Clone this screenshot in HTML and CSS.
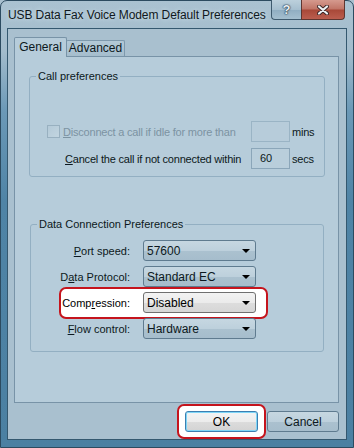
FILE: index.html
```html
<!DOCTYPE html>
<html>
<head>
	<meta charset="utf-8">
	<title>USB Data Fax Voice Modem Default Preferences</title>
	<link rel="stylesheet" href="styles.css">
</head>
<body>
<div class="window">
	<div class="titlebar">
		<span class="title">USB Data Fax Voice Modem Default Preferences</span>
		<div class="caption">
			<span class="cap help">?</span>
			<span class="cap close">
				<svg width="12" height="10" viewBox="0 0 12 10">
					<path d="M2 1.5 L10 8.5 M10 1.5 L2 8.5" stroke="#3a2424" stroke-width="4" stroke-linecap="round"/>
					<path d="M2 1.5 L10 8.5 M10 1.5 L2 8.5" stroke="#eef2f4" stroke-width="2.2" stroke-linecap="round"/>
				</svg>
			</span>
		</div>
	</div>
	<div class="client">
		<div class="tabs">
			<span class="tab active">General</span>
			<span class="tab">Advanced</span>
		</div>
		<div class="page">
			<fieldset class="group calls">
				<legend>Call preferences</legend>
				<div class="line first disabled">
					<span class="check"></span>
					<span class="text wide"><u>D</u>isconnect a call if idle for more than</span>
					<span class="field dim"></span>
					<span class="unit">mins</span>
				</div>
				<div class="line second">
					<span class="text"><u>C</u>ancel the call if not connected within</span>
					<span class="field">60</span>
					<span class="unit">secs</span>
				</div>
			</fieldset>
			<fieldset class="group data">
				<legend>Data Connection Preferences</legend>
				<div class="row">
					<label><u>P</u>ort speed:</label>
					<div class="combo"><span>57600</span><i class="arrow"></i></div>
				</div>
				<div class="row">
					<label>D<u>a</u>ta Protocol:</label>
					<div class="combo"><span>Standard EC</span><i class="arrow"></i></div>
				</div>
				<div class="row mark">
					<label>Comp<u>r</u>ession:</label>
					<div class="combo light"><span>Disabled</span><i class="arrow"></i></div>
				</div>
				<div class="row">
					<label><u>F</u>low control:</label>
					<div class="combo"><span>Hardware</span><i class="arrow"></i></div>
				</div>
			</fieldset>
		</div>
		<div class="buttons">
			<div class="mark-btn"><span class="btn ok">OK</span></div>
			<span class="btn">Cancel</span>
		</div>
	</div>
</div>
</body>
</html>
```

FILE: styles.css
```css
* {
	box-sizing: border-box;
}
html, body {
	margin: 0;
}
body {
	width: 354px;
	height: 448px;
	overflow: hidden;
	font-family: "Liberation Sans", Arial, sans-serif;
	font-size: 11px;
	color: #0c1820;
	background: #a9c0cf;
}
u {
	text-decoration: underline;
	text-underline-offset: 1px;
}

.window {
	width: 354px;
	height: 448px;
	border: 1px solid #2c4b60;
	border-radius: 7px 7px 0 0;
	background: linear-gradient(180deg, #aac2d1 0, #a3bccc 50px, #6b99b7 110px, #4f84a6 200px, #4b80a2 100%);
	display: flex;
	flex-direction: column;
}

/* title bar */
.titlebar {
	height: 27px;
	display: flex;
	align-items: flex-start;
	padding-left: 7px;
}
.title {
	font-size: 12px;
	letter-spacing: -0.1px;
	margin-top: 7px;
	color: #101820;
	text-shadow: 0 0 5px rgba(225, 238, 245, 0.9);
}
.caption {
	margin-left: auto;
	margin-right: 8px;
	margin-top: -1px;
	display: flex;
}
.cap {
	height: 20px;
	display: flex;
	align-items: center;
	justify-content: center;
	border: 1px solid #3e5a6e;
	border-top: 0;
}
.help {
	width: 30px;
	border-radius: 0 0 0 4px;
	border-right: 0;
	background: linear-gradient(180deg, #bcd0dc 0, #a6bfcf 50%, #8fadc1 51%, #a4bfcf 100%);
	color: #e9f0f4;
	font-weight: bold;
	font-size: 13px;
	text-shadow: 0 0 1px #24384a, 0 0 1px #24384a, 0 0 2px #24384a;
}
.close {
	width: 44px;
	border-radius: 0 0 4px 0;
	background: linear-gradient(180deg, #d59a8e 0, #c07466 48%, #a84838 52%, #bb5e4f 100%);
	border-color: #5e3630;
}

/* client area */
.client {
	flex: 1;
	margin: 0 6px 7px 6px;
	border: 1px solid #34586f;
	background: #a9c0cf;
	padding: 8px 7px 0 6px;
	display: flex;
	flex-direction: column;
}
.tabs {
	height: 19px;
	display: flex;
	align-items: flex-end;
}
.tab {
	height: 16px;
	width: 59px;
	margin-left: -1px;
	border: 1px solid #7e99ad;
	border-bottom: 0;
	border-radius: 2px 2px 0 0;
	background: linear-gradient(180deg, #b3c9d7 0, #a5bdcd 100%);
	text-align: center;
	line-height: 15px;
	font-size: 12px;
}
.tab.active {
	position: relative;
	z-index: 1;
	width: 53px;
	height: 20px;
	margin-left: 0;
	margin-bottom: -1px;
	background: #b6ccda;
	border-color: #7893a7;
	line-height: 18px;
}

.page {
	height: 347px;
	border: 1px solid #7893a7;
	background: #b6ccda;
}

/* group boxes */
.group {
	margin: 0;
	padding: 0;
	border: 1px solid #93afc2;
	border-radius: 3px;
}
.group legend {
	margin-left: 6px;
	padding: 0 2px;
	line-height: 13px;
	font-size: 11px;
}
.calls {
	width: 296px;
	margin: 13px 0 0 14px;
	padding-top: 38px;
	padding-bottom: 7px;
}
.data {
	width: 294px;
	margin: 41px 0 0 15px;
	padding-top: 9px;
	padding-bottom: 12px;
}

.line {
	display: flex;
	align-items: center;
	height: 21px;
	letter-spacing: -0.2px;
}
.line.first {
	padding-left: 17px;
}
.line.second {
	margin-top: 6px;
	padding-left: 35px;
}
.check {
	width: 13px;
	height: 13px;
	border: 1px solid #98b0c0;
	background: linear-gradient(135deg, #b4cad8, #c2d5e0);
	margin-right: 3px;
}
.text {
	width: 186px;
}
.text.wide {
	width: 188px;
}
.disabled .text {
	color: #7c93a2;
}
.field {
	width: 39px;
	height: 21px;
	border: 1px solid #8ba6b9;
	background: #b9cedb;
	padding: 3px 0 0 8px;
}
.field.dim {
	border-color: #9ab4c5;
	background: #b7ccda;
}
.unit {
	margin-left: 2px;
}

/* combos */
.row {
	display: flex;
	align-items: center;
	height: 21px;
	margin-top: 5px;
}
.row:first-of-type {
	margin-top: 0;
}
.row label {
	width: 99px;
	text-align: right;
	margin-right: 13px;
}
.combo {
	width: 113px;
	height: 21px;
	border: 1px solid #5f7b8f;
	border-radius: 3px;
	background: linear-gradient(180deg, #c6d7e1 0, #bdd0dc 50%, #abc1cf 51%, #a6bdcc 100%);
	display: flex;
	align-items: center;
	padding: 0 5px 0 3px;
	font-size: 12px;
}
.combo span {
	flex: 1;
}
.combo.light {
	border-color: #707070;
	background: linear-gradient(180deg, #f3f3f3 0, #ebebeb 50%, #dddddd 51%, #d6d6d6 100%);
	color: #000;
}
.arrow {
	width: 0;
	height: 0;
	border-left: 4px solid transparent;
	border-right: 4px solid transparent;
	border-top: 4px solid #000;
	margin-top: 1px;
}

.row.mark {
	height: 32px;
	width: 209px;
	margin: 0 0 0 28px;
	border: 2px solid #c5141d;
	border-radius: 7px;
	background: #fff;
	padding: 1px 0 2px 0;
	color: #000;
}
.row.mark + .row {
	margin-top: -1px;
}
.row.mark label {
	width: 69px;
}

/* bottom buttons */
.buttons {
	margin-top: 1px;
	height: 35px;
	display: flex;
	justify-content: flex-end;
	align-items: center;
	gap: 1px;
}
.mark-btn {
	border: 2px solid #c5141d;
	border-radius: 7px;
	background: #fff;
	padding: 5px 6px;
	height: 35px;
}
.btn {
	display: flex;
	align-items: center;
	justify-content: center;
	width: 72px;
	height: 21px;
	border: 1px solid #5f7b8f;
	border-radius: 3px;
	background: linear-gradient(180deg, #c6d7e1 0, #bdd0dc 50%, #abc1cf 51%, #a6bdcc 100%);
	font-size: 12px;
}
.btn.ok {
	width: 73px;
	border-color: #3c7fb1;
	box-shadow: inset 0 0 0 1px #7fd6f7;
	background: linear-gradient(180deg, #f4f4f4 0, #ececec 50%, #dcdcdc 51%, #d3d3d3 100%);
	color: #000;
}
```
